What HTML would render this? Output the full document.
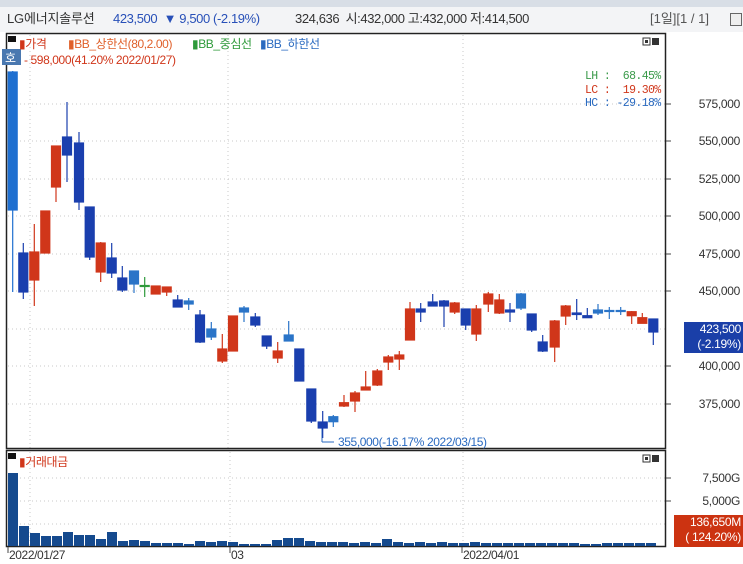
<!DOCTYPE html>
<html><head><meta charset="utf-8">
<style>
body{margin:0;width:743px;height:564px;overflow:hidden;background:#fff;font-family:"Liberation Sans","Noto Sans CJK KR",sans-serif;position:relative}
.t{position:absolute;font-size:12px;white-space:nowrap;line-height:14px;letter-spacing:-0.4px}
.ax{position:absolute;right:3px;font-size:12px;color:#333;letter-spacing:-0.3px;line-height:14px}
</style></head><body>
<div style="position:absolute;left:0;top:0;width:743px;height:7px;background:#d8dee6"></div>
<div style="position:absolute;left:0;top:7px;width:743px;height:25px;background:#f3f4f6"></div>
<div class="t" style="left:7px;top:12px;color:#333;font-size:13px;letter-spacing:-0.2px">LG에너지솔루션</div>
<div class="t" style="left:113px;top:12px;color:#2850b8;font-size:13px">423,500 &nbsp;▼ 9,500 (-2.19%)</div>
<div class="t" style="left:295px;top:12px;color:#333;font-size:13px">324,636 &nbsp;시:432,000 고:432,000 저:414,500</div>
<div class="t" style="left:650px;top:12px;color:#555;font-size:13px;letter-spacing:0px">[1일][1 / 1]</div>
<div style="position:absolute;left:730px;top:13px;width:10px;height:11px;border:1px solid #666;background:#eee"></div>

<svg width="743" height="564" style="position:absolute;left:0;top:0">
<g stroke="#c8c8c8" stroke-dasharray="1,3" stroke-width="1">
<line x1="8" x2="665" y1="104" y2="104"/><line x1="8" x2="665" y1="141" y2="141"/><line x1="8" x2="665" y1="179" y2="179"/><line x1="8" x2="665" y1="216" y2="216"/><line x1="8" x2="665" y1="254" y2="254"/><line x1="8" x2="665" y1="291" y2="291"/><line x1="8" x2="665" y1="329" y2="329"/><line x1="8" x2="665" y1="366" y2="366"/><line x1="8" x2="665" y1="404" y2="404"/>
<line x1="30" x2="30" y1="35" y2="448"/><line x1="228" x2="228" y1="35" y2="448"/><line x1="463" x2="463" y1="35" y2="448"/>
<line x1="8" x2="665" y1="478" y2="478"/><line x1="8" x2="665" y1="501" y2="501"/><line x1="8" x2="665" y1="524" y2="524"/>
<line x1="30" x2="30" y1="452" y2="546"/><line x1="230" x2="230" y1="452" y2="546"/><line x1="463" x2="463" y1="452" y2="546"/>
</g>
<g fill="none" stroke="#222" stroke-width="1.5">
<rect x="6.5" y="33.5" width="659" height="415"/>
<rect x="6.5" y="450.5" width="659" height="96"/>
</g>
<g stroke="#444"><line x1="666" x2="671" y1="104" y2="104"/><line x1="666" x2="671" y1="141" y2="141"/><line x1="666" x2="671" y1="179" y2="179"/><line x1="666" x2="671" y1="216" y2="216"/><line x1="666" x2="671" y1="254" y2="254"/><line x1="666" x2="671" y1="291" y2="291"/><line x1="666" x2="671" y1="366" y2="366"/><line x1="666" x2="671" y1="404" y2="404"/><line x1="666" x2="671" y1="478" y2="478"/><line x1="666" x2="671" y1="501" y2="501"/>
<line x1="8" x2="8" y1="547" y2="553"/><line x1="230" x2="230" y1="547" y2="553"/><line x1="462" x2="462" y1="547" y2="553"/></g>
<rect x="8" y="36" width="8" height="6" fill="#111"/>
<rect x="643" y="38" width="7" height="7" fill="#fff" stroke="#333"/><rect x="645" y="40" width="3" height="3" fill="#333"/>
<rect x="652" y="38" width="7" height="7" fill="#333"/>
<rect x="8" y="453" width="8" height="6" fill="#111"/>
<rect x="643" y="455" width="7" height="7" fill="#fff" stroke="#333"/><rect x="645" y="457" width="3" height="3" fill="#333"/>
<rect x="652" y="455" width="7" height="7" fill="#333"/>
<rect x="2" y="49" width="19" height="16" fill="#4a78b0"/>
<text x="5" y="62" font-size="12" fill="#fff" font-family="Noto Sans CJK KR,sans-serif">호</text>
<line x1="322" y1="428" x2="322" y2="442" stroke="#2a6ac0"/><line x1="322" y1="442" x2="334" y2="442" stroke="#2a6ac0"/>
<g stroke-width="1.2">
<g stroke="#1e6fd0" fill="#1e6fd0"><line x1="12.7" x2="12.7" y1="71" y2="292"/><rect x="8.2" y="72" width="9" height="138"/></g>
</g>
<g stroke-width="1.2">
<g stroke="#1a3fae" fill="#1a3fae">
<line x1="23.3" x2="23.3" y1="243" y2="299"/><rect x="18.8" y="253" width="9" height="39"/>
<line x1="67" x2="67" y1="102" y2="182"/><rect x="62.5" y="137" width="9" height="18"/>
<line x1="79" x2="79" y1="132" y2="210"/><rect x="74.5" y="143" width="9" height="59"/>
<line x1="89.7" x2="89.7" y1="207" y2="260"/><rect x="85.2" y="207" width="9" height="50"/>
<line x1="111.7" x2="111.7" y1="243" y2="278"/><rect x="107.2" y="258" width="9" height="15"/>
<line x1="122.3" x2="122.3" y1="266" y2="292"/><rect x="117.8" y="278" width="9" height="12"/>
<line x1="177.7" x2="177.7" y1="295" y2="307"/><rect x="173.2" y="300" width="9" height="7"/>
<line x1="200" x2="200" y1="310" y2="343"/><rect x="195.5" y="315" width="9" height="27"/>
<line x1="255.3" x2="255.3" y1="313" y2="327"/><rect x="250.8" y="317" width="9" height="8"/>
<line x1="266.7" x2="266.7" y1="336" y2="349"/><rect x="262.2" y="336" width="9" height="10"/>
<line x1="299.3" x2="299.3" y1="349" y2="381"/><rect x="294.8" y="349" width="9" height="32"/>
<line x1="311.3" x2="311.3" y1="389" y2="423"/><rect x="306.8" y="389" width="9" height="32"/>
<line x1="322.7" x2="322.7" y1="411" y2="438"/><rect x="318.2" y="422" width="9" height="6"/>
<line x1="420.7" x2="420.7" y1="303" y2="322"/><rect x="416.2" y="309" width="9" height="3"/>
<line x1="432.7" x2="432.7" y1="294" y2="306"/><rect x="428.2" y="302" width="9" height="4"/>
<line x1="444" x2="444" y1="300" y2="327"/><rect x="439.5" y="301" width="9" height="5"/>
<line x1="465.7" x2="465.7" y1="309" y2="330"/><rect x="461.2" y="309" width="9" height="16"/>
<line x1="510" x2="510" y1="303" y2="322"/><rect x="505.5" y="310" width="9" height="2"/>
<line x1="531.7" x2="531.7" y1="314" y2="332"/><rect x="527.2" y="314" width="9" height="16"/>
<line x1="542.7" x2="542.7" y1="335" y2="352"/><rect x="538.2" y="342" width="9" height="9"/>
<line x1="576.7" x2="576.7" y1="299" y2="320"/><rect x="572.2" y="313" width="9" height="1.5"/>
<line x1="587.3" x2="587.3" y1="308" y2="318"/><rect x="582.8" y="315.7" width="9" height="2"/>
<line x1="653.3" x2="653.3" y1="319" y2="345"/><rect x="648.8" y="319" width="9" height="13"/>
</g>
<g stroke="#2a74c8" fill="#2a74c8">
<line x1="134" x2="134" y1="271" y2="293"/><rect x="129.5" y="271" width="9" height="13"/>
<line x1="188.7" x2="188.7" y1="298" y2="310"/><rect x="184.2" y="301" width="9" height="3"/>
<line x1="211.3" x2="211.3" y1="322" y2="340"/><rect x="206.8" y="329" width="9" height="8"/>
<line x1="244" x2="244" y1="306" y2="322"/><rect x="239.5" y="308" width="9" height="4"/>
<line x1="288.7" x2="288.7" y1="321" y2="341"/><rect x="284.2" y="335" width="9" height="6"/>
<line x1="333.3" x2="333.3" y1="415" y2="427"/><rect x="328.8" y="416.7" width="9" height="5"/>
<line x1="521" x2="521" y1="293" y2="310"/><rect x="516.5" y="294" width="9" height="14"/>
<line x1="598" x2="598" y1="304" y2="315"/><rect x="593.5" y="310" width="9" height="3"/>
<line x1="609.3" x2="609.3" y1="307" y2="319"/><rect x="604.8" y="310.5" width="9" height="1"/>
<line x1="620.7" x2="620.7" y1="307" y2="315"/><rect x="616.2" y="310.5" width="9" height="1"/>
</g>
<g stroke="#2e9a3a" fill="#2e9a3a"><line x1="144.7" x2="144.7" y1="277" y2="297"/><rect x="140.2" y="285.5" width="9" height="1"/></g>
<g stroke="#d0361a" fill="#d0361a">
<line x1="34.3" x2="34.3" y1="224" y2="306"/><rect x="29.8" y="252" width="9" height="28"/>
<line x1="45.3" x2="45.3" y1="211" y2="253"/><rect x="40.8" y="211" width="9" height="42"/>
<line x1="56" x2="56" y1="146" y2="202"/><rect x="51.5" y="146" width="9" height="41"/>
<line x1="100.7" x2="100.7" y1="242" y2="282"/><rect x="96.2" y="243" width="9" height="29"/>
<line x1="155.7" x2="155.7" y1="286" y2="294"/><rect x="151.2" y="286" width="9" height="8"/>
<line x1="166.7" x2="166.7" y1="287" y2="296"/><rect x="162.2" y="287" width="9" height="5"/>
<line x1="222.3" x2="222.3" y1="334" y2="363"/><rect x="217.8" y="349" width="9" height="12"/>
<line x1="233" x2="233" y1="316" y2="351"/><rect x="228.5" y="316" width="9" height="35"/>
<line x1="277.7" x2="277.7" y1="342" y2="363"/><rect x="273.2" y="351" width="9" height="7"/>
<line x1="344" x2="344" y1="395" y2="407"/><rect x="339.5" y="402.7" width="9" height="3.3"/>
<line x1="355" x2="355" y1="391" y2="412"/><rect x="350.5" y="393" width="9" height="8"/>
<line x1="365.7" x2="365.7" y1="371" y2="390"/><rect x="361.2" y="387" width="9" height="3"/>
<line x1="377.3" x2="377.3" y1="369" y2="386"/><rect x="372.8" y="371" width="9" height="14"/>
<line x1="388.3" x2="388.3" y1="355" y2="370"/><rect x="383.8" y="357" width="9" height="5"/>
<line x1="399.3" x2="399.3" y1="351" y2="370"/><rect x="394.8" y="355" width="9" height="4"/>
<line x1="410" x2="410" y1="302" y2="340"/><rect x="405.5" y="309" width="9" height="31"/>
<line x1="454.7" x2="454.7" y1="302" y2="314"/><rect x="450.2" y="303" width="9" height="9"/>
<line x1="476.3" x2="476.3" y1="305" y2="341"/><rect x="471.8" y="309" width="9" height="25"/>
<line x1="488.3" x2="488.3" y1="292" y2="312"/><rect x="483.8" y="294" width="9" height="10"/>
<line x1="499.3" x2="499.3" y1="294" y2="314"/><rect x="494.8" y="300" width="9" height="13"/>
<line x1="554.7" x2="554.7" y1="320" y2="362"/><rect x="550.2" y="321" width="9" height="26"/>
<line x1="565.7" x2="565.7" y1="305" y2="325"/><rect x="561.2" y="306" width="9" height="10"/>
<line x1="631.7" x2="631.7" y1="311" y2="324"/><rect x="627.2" y="311.7" width="9" height="4"/>
<line x1="642.3" x2="642.3" y1="313" y2="323"/><rect x="637.8" y="317.7" width="9" height="5.6"/>
</g>
</g>
<g fill="#154a8e">
<rect x="8" y="473" width="10" height="73"/><rect x="19" y="526" width="10" height="20"/><rect x="30" y="533" width="10" height="13"/><rect x="41" y="536" width="10" height="10"/><rect x="52" y="536" width="10" height="10"/><rect x="63" y="532" width="10" height="14"/><rect x="74" y="535" width="10" height="11"/><rect x="85" y="535" width="10" height="11"/><rect x="96" y="539" width="10" height="7"/><rect x="107" y="532" width="10" height="14"/><rect x="118" y="541" width="10" height="5"/><rect x="129" y="540" width="10" height="6"/><rect x="140" y="541" width="10" height="5"/><rect x="151" y="543" width="10" height="3"/><rect x="162" y="543" width="10" height="3"/><rect x="173" y="543" width="10" height="3"/><rect x="184" y="544" width="10" height="2"/><rect x="195" y="541" width="10" height="5"/><rect x="206" y="542" width="10" height="4"/><rect x="217" y="541" width="10" height="5"/><rect x="228" y="542" width="10" height="4"/><rect x="239" y="544" width="10" height="2"/><rect x="250" y="544" width="10" height="2"/><rect x="261" y="544" width="10" height="2"/><rect x="272" y="540" width="10" height="6"/><rect x="283" y="538" width="10" height="8"/><rect x="294" y="538" width="10" height="8"/><rect x="305" y="541" width="10" height="5"/><rect x="316" y="542" width="10" height="4"/><rect x="327" y="542" width="10" height="4"/><rect x="338" y="542" width="10" height="4"/><rect x="349" y="543" width="10" height="3"/><rect x="360" y="542" width="10" height="4"/><rect x="371" y="543" width="10" height="3"/><rect x="382" y="539" width="10" height="7"/><rect x="393" y="542" width="10" height="4"/><rect x="404" y="543" width="10" height="3"/><rect x="415" y="542" width="10" height="4"/><rect x="426" y="543" width="10" height="3"/><rect x="437" y="542" width="10" height="4"/><rect x="448" y="543" width="10" height="3"/><rect x="459" y="543" width="10" height="3"/><rect x="470" y="542" width="10" height="4"/><rect x="481" y="543" width="10" height="3"/><rect x="492" y="543" width="10" height="3"/><rect x="503" y="543" width="10" height="3"/><rect x="514" y="543" width="10" height="3"/><rect x="525" y="543" width="10" height="3"/><rect x="536" y="543" width="10" height="3"/><rect x="547" y="543" width="10" height="3"/><rect x="558" y="543" width="10" height="3"/><rect x="569" y="543" width="10" height="3"/><rect x="580" y="544" width="10" height="2"/><rect x="591" y="544" width="10" height="2"/><rect x="602" y="543" width="10" height="3"/><rect x="613" y="543" width="10" height="3"/><rect x="624" y="543" width="10" height="3"/><rect x="635" y="543" width="10" height="3"/><rect x="646" y="543" width="10" height="3"/>
</g>
</svg>

<div class="t" style="left:19px;top:37px;color:#d0361a">▮가격</div>
<div class="t" style="left:68px;top:37px;color:#e0602a">▮BB_상한선(80,2.00)</div>
<div class="t" style="left:192px;top:37px;color:#2e9a3a">▮BB_중심선</div>
<div class="t" style="left:260px;top:37px;color:#2a6ac0">▮BB_하한선</div>
<div class="t" style="left:24px;top:53px;color:#d0361a">- 598,000(41.20% 2022/01/27)</div>
<div class="t" style="left:338px;top:435px;color:#2a6ac0">355,000(-16.17% 2022/03/15)</div>
<div class="t" style="left:585px;top:70px;color:#3a9a4a;font-family:'Liberation Mono',monospace;font-size:11.5px;letter-spacing:-0.6px">LH :&nbsp;&nbsp;68.45%</div>
<div class="t" style="left:585px;top:84px;color:#d0361a;font-family:'Liberation Mono',monospace;font-size:11.5px;letter-spacing:-0.6px">LC :&nbsp;&nbsp;19.30%</div>
<div class="t" style="left:585px;top:97px;color:#2a6ac0;font-family:'Liberation Mono',monospace;font-size:11.5px;letter-spacing:-0.6px">HC : -29.18%</div>
<div class="t" style="left:19px;top:455px;color:#d0361a">▮거래대금</div>

<div class="ax" style="top:97px">575,000</div>
<div class="ax" style="top:134px">550,000</div>
<div class="ax" style="top:172px">525,000</div>
<div class="ax" style="top:209px">500,000</div>
<div class="ax" style="top:247px">475,000</div>
<div class="ax" style="top:284px">450,000</div>
<div class="ax" style="top:359px">400,000</div>
<div class="ax" style="top:397px">375,000</div>
<div style="position:absolute;left:684px;top:322px;width:59px;height:31px;background:#1a3fa8;color:#fff;font-size:12px;line-height:15px;text-align:right;letter-spacing:-0.3px;padding-right:2px;box-sizing:border-box">423,500<br>(-2.19%)</div>
<div class="ax" style="top:471px">7,500G</div>
<div class="ax" style="top:494px">5,000G</div>
<div style="position:absolute;left:674px;top:515px;width:69px;height:32px;background:#cc3311;color:#fff;font-size:12px;line-height:15px;text-align:right;letter-spacing:-0.3px;padding-right:2px;box-sizing:border-box">136,650M<br>( 124.20%)</div>
<div class="t" style="left:9px;top:548px;color:#333">2022/01/27</div>
<div class="t" style="left:231px;top:548px;color:#333">03</div>
<div class="t" style="left:463px;top:548px;color:#333">2022/04/01</div>
</body></html>
